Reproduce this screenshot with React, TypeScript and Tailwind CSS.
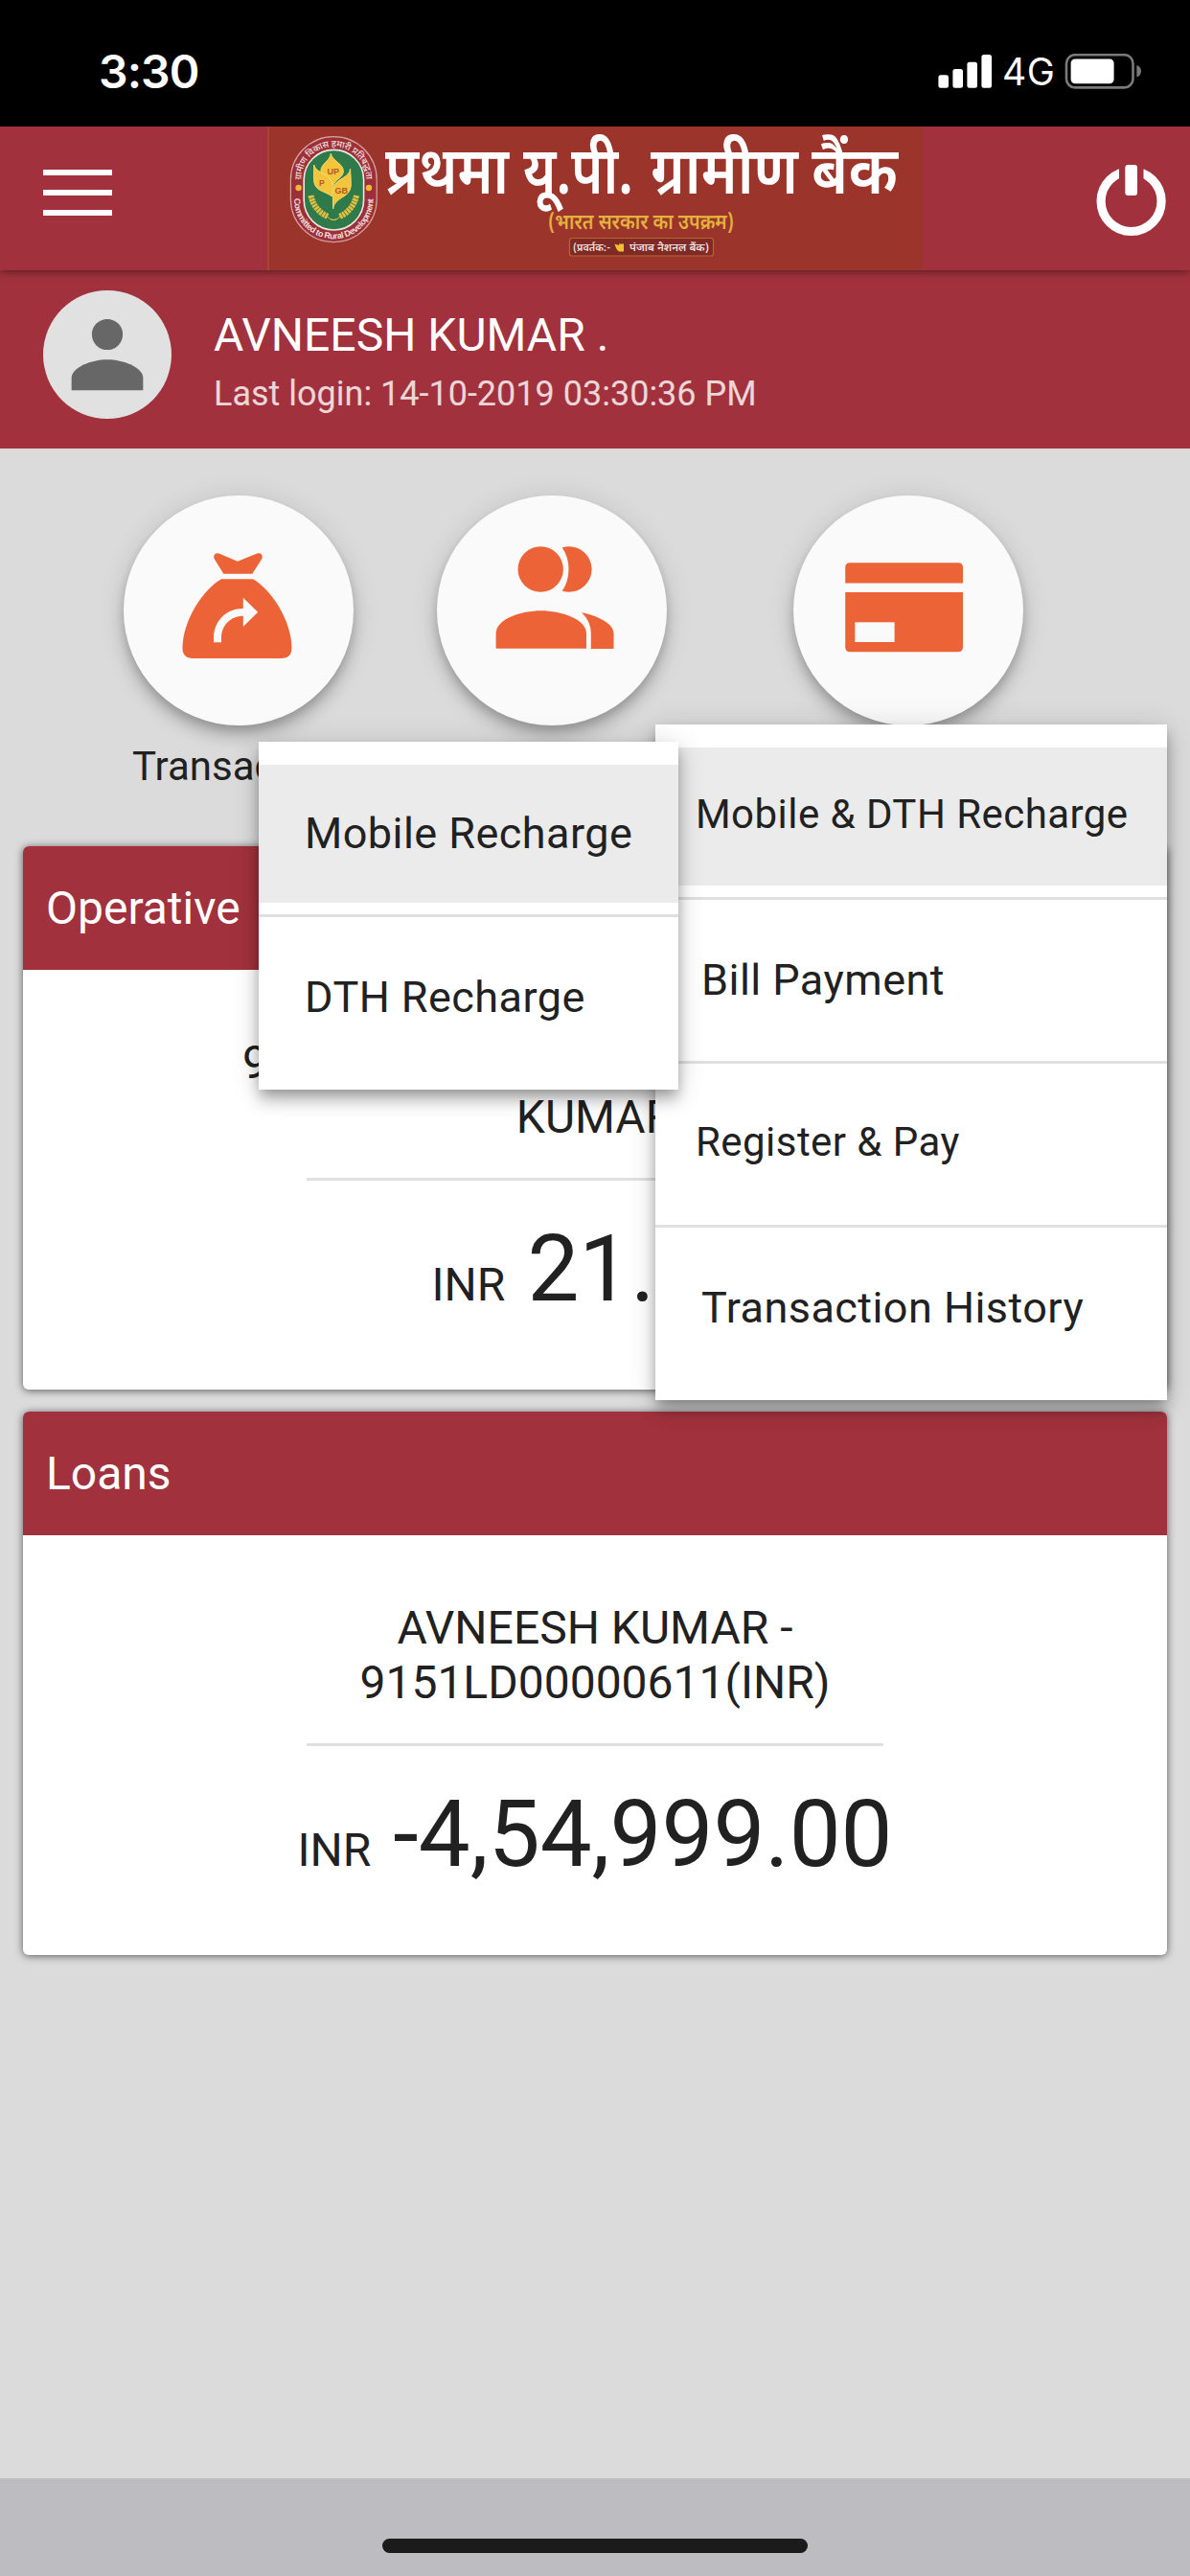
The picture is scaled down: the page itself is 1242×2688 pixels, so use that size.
import type { ReactNode } from 'react';

function StatusBar() {
  return (
    <div className="flex h-[132px] items-start justify-between bg-black pr-[51px] pl-[103px] text-white">
      <span className="mt-[45px] font-['Inter'] text-[48px] leading-[60px] font-semibold tracking-[-0.9px]">3:30</span>
      <div className="mt-[56px] flex items-center">
        <svg width="56" height="37" viewBox="979 56 56 37" fill="#fff">
          <rect x="979.4" y="78.3" width="10.6" height="13.4" rx="2.5" />
          <rect x="994.4" y="72" width="10.6" height="19.7" rx="2.5" />
          <rect x="1009.4" y="64.7" width="10.6" height="27" rx="2.5" />
          <rect x="1024.4" y="57" width="10.6" height="34.7" rx="2.5" />
        </svg>
        <span className="ml-[11px] w-[65px] font-['Inter'] text-[39px] leading-[37px] tracking-[0.5px]">4G</span>
        <svg width="80" height="37" viewBox="1111 56 80 37">
          <rect x="1113" y="57.2" width="69.5" height="34.2" rx="9" fill="none" stroke="#7a7a7a" strokeWidth="2.6" />
          <rect x="1117.6" y="61.4" width="45" height="25.8" rx="4.5" fill="#fff" />
          <path d="M1186.4 68 C1189.5 69.2 1191 71.5 1191 74.3 S1189.5 79.4 1186.4 80.6Z" fill="#7a7a7a" />
        </svg>
      </div>
    </div>
  );
}

function BankEmblem() {
  return (
    <g>
      <rect x="303.4" y="142.6" width="89.8" height="110" rx="44.9" fill="#9b3038" stroke="#d9a3a0" strokeWidth="1.2" />
      <rect x="317.2" y="156.4" width="62.4" height="83.6" rx="31.2" fill="#2f7a4b" stroke="#f0e6e0" strokeWidth="1.6" />
      <path id="emblem-top" d="M314.5 189 V187 A33.8 33.8 0 0 1 382.1 187 V189" fill="none" />
      <path id="emblem-bottom" d="M307 206 V208 A41.3 41.3 0 0 0 389.6 208 V206" fill="none" />
      <text className="font-['Noto_Sans_Devanagari',sans-serif]" fontSize="9.5" fontWeight="500" fill="#f1dcda">
        <textPath href="#emblem-top" startOffset="1" textLength="107">ग्रामीण विकास हमारी प्रतिबद्धता</textPath>
      </text>
      <text className="font-['Liberation_Sans',sans-serif]" fontSize="9" fontWeight="700" fill="#f1dcda">
        <textPath href="#emblem-bottom" startOffset="1" textLength="131">Committed to Rural Development</textPath>
      </text>
      <circle cx="311.6" cy="196" r="3.2" fill="#f2b632" />
      <circle cx="385" cy="196" r="3.2" fill="#f2b632" />
      <g fill="#f3c53c" stroke="#f7e27a" strokeWidth="0.8" strokeLinejoin="round">
        <path d="M345.3 160 C346.5 168 358.8 170.5 358.4 179 C358 185.5 350.5 186.5 347.8 193.5 C344.5 186.5 334.6 185.5 334.8 178.5 C335 170.5 344.6 168 345.3 160Z" />
        <path d="M327.6 172 C330.5 182 345.5 180 347.3 194 C347.8 199 346.8 203 346.4 205 C340 199.5 329.6 200 327.8 190 C327 184 327.8 178 327.6 172Z" />
        <path d="M365.6 176 C365 186 349.5 186 347.8 197 C347.5 205 347.2 211 347.6 218 C349.5 205 365 207 366.3 194 C366.6 188 365.8 182 365.6 176Z" />
      </g>
      <g className="font-['Liberation_Sans',sans-serif]" fontWeight="700" fill="#b5562a">
        <text x="341.5" y="181.5" fontSize="9">UP</text>
        <text x="333" y="194" fontSize="8.5">P</text>
        <text x="349.5" y="201.5" fontSize="9">GB</text>
      </g>
      <g stroke="#e5c03f" fill="none">
        <path d="M324.5 204 C327 216 334 222 342 226" strokeWidth="6" strokeDasharray="2.6 0.7" />
        <path d="M372 204 C369.5 216 362.5 222 354.5 226" strokeWidth="6" strokeDasharray="2.6 0.7" />
        <path d="M341 225 Q345 231 351 229 M355.5 225 Q351.5 231 345.5 229" strokeWidth="1" />
      </g>
    </g>
  );
}

function BankBanner() {
  return (
    <svg className="block" width="684" height="150" viewBox="279 132 684 150">
      <rect x="279" y="132" width="684" height="150" fill="#9b352c" />
      <rect x="279" y="132" width="2" height="150" fill="#a8452f" />
      <BankEmblem />
      <g className="font-['Noto_Sans_Devanagari',sans-serif]" fontSize="69" fontWeight="600" fill="#fff">
        <text x="402" y="202" textLength="129" lengthAdjust="spacingAndGlyphs">प्रथमा</text>
        <text x="546" y="202" textLength="115" lengthAdjust="spacingAndGlyphs">यू.पी.</text>
        <text x="679" y="202" textLength="154" lengthAdjust="spacingAndGlyphs">ग्रामीण</text>
        <text x="847" y="202" textLength="90" lengthAdjust="spacingAndGlyphs">बैंक</text>
      </g>
      <text className="font-['Noto_Sans_Devanagari',sans-serif]" x="572" y="238.5" fontSize="22" fontWeight="600" fill="#e3b23c" textLength="194" lengthAdjust="spacingAndGlyphs">
        (भारत सरकार का उपक्रम)
      </text>
      <rect x="594.5" y="248.5" width="150" height="18.5" rx="2.5" fill="#7f2a26" stroke="#b8662b" strokeWidth="1.2" />
      <g className="font-['Noto_Sans_Devanagari',sans-serif]" fontSize="11" fontWeight="600" fill="#f0dfdc">
        <text x="598" y="262" textLength="39" lengthAdjust="spacingAndGlyphs">(प्रवर्तक:-</text>
        <text x="657" y="262" textLength="83" lengthAdjust="spacingAndGlyphs">पंजाब नैशनल बैंक)</text>
      </g>
      <path d="M641.5 254.5 L646 256 V254.5 H651 V262.5 H646 Q643 260.5 641.5 254.5Z" fill="#f0c02f" />
    </svg>
  );
}

function Header() {
  return (
    <header className="relative z-10 flex h-[150px] items-start bg-[#a1323d] shadow-[0_1px_9px_rgba(0,0,0,0.5)]">
      <div className="mt-[45px] ml-[45px] flex w-[72px] flex-col gap-[15px]">
        <div className="h-[6px] bg-white" />
        <div className="h-[6px] bg-white" />
        <div className="h-[6px] bg-white" />
      </div>
      <div className="ml-[162px]">
        <BankBanner />
      </div>
      <svg className="mt-[38px] ml-[180px]" width="76" height="78" viewBox="1143 170 76 78">
        <circle cx="1180.6" cy="210" r="31.5" fill="none" stroke="#fff" strokeWidth="9.2" />
        <rect x="1168" y="170" width="25.5" height="24" fill="#a1323d" />
        <rect x="1174.3" y="172" width="12.7" height="32" rx="3" fill="#fff" />
      </svg>
    </header>
  );
}

function UserBar() {
  return (
    <section className="flex h-[186px] items-start bg-[#a1323d] pl-[44.5px] font-['Roboto',sans-serif]">
      <div className="mt-[21px] flex h-[134px] w-[134px] items-center justify-center rounded-full bg-[#e1e1e1]">
        <svg width="112" height="112" viewBox="0 0 24 24" fill="#676767">
          <circle cx="12" cy="7.5" r="3.45" />
          <path d="M4 20 V17.2 C4 14.8 8.5 13.1 12 13.1 S20 14.8 20 17.2 V20Z" />
        </svg>
      </div>
      <div className="mt-[39px] ml-[44.5px] flex flex-col gap-[12px]">
        <p className="text-[48px] leading-[57px] text-white">AVNEESH KUMAR .</p>
        <p className="text-[36px] leading-[42px] text-white/80">Last login: 14-10-2019 03:30:36 PM</p>
      </div>
    </section>
  );
}

function MoneyBagIcon() {
  return (
    <svg width="240" height="240" viewBox="129 517 240 240">
      <g fill="#ec6337">
        <path d="M233.3 598.7 L224.2 584 C221.5 579.5 225 575.8 229 577.8 L248 585.7 L268 577.8 C272 576 275.5 579.5 272.8 584 L263.3 598.7Z" />
        <path d="M231 604.3 H264 C283 615 304.4 648 304.4 676 Q304.4 687 293.4 687 H201.5 Q190.5 687 190.5 676 C190.5 648 212 615 231 604.3Z" />
      </g>
      <path d="M223 670.3 V666 C223 648 236 635 253.8 635 V623.7 L269.2 638.7 L253.8 654 V642.7 C241 642.7 231 652 231 666 V670.3Z" fill="#fafafa" />
    </svg>
  );
}

function PeopleIcon() {
  return (
    <svg width="240" height="240" viewBox="456 517 240 240" fill="#ec6337">
      <circle cx="564.2" cy="594" r="23.7" />
      <path d="M586.8 571.5 Q590 570.3 593.9 570.3 A23.7 23.7 0 0 1 593.9 617.7 Q590 617.7 586.8 616.5 Q593.5 607 593.5 594 Q593.5 581 586.8 571.5Z" />
      <path d="M517.6 676.7 V661 C517.6 646 544 637.3 564.5 637.3 S612 646 612 661 V676.7Z" />
      <path d="M607 639.3 C622 642 640.5 650 640.5 661 V677 H616.8 V661 C616.8 652 613 645 607 639.3Z" />
    </svg>
  );
}

function CardIcon() {
  return (
    <svg width="240" height="240" viewBox="828 517 240 240" fill="#ec6337">
      <path d="M882.2 608.5 V592.3 Q882.2 587.3 887.2 587.3 H1000 Q1005 587.3 1005 592.3 V608.5Z" />
      <path d="M882.2 618 H1005 V675.3 Q1005 680.3 1000 680.3 H887.2 Q882.2 680.3 882.2 675.3Z" />
      <rect x="892.3" y="649.3" width="41.3" height="20.7" fill="#fafafa" />
    </svg>
  );
}

function RoundButton({ children }: { children: ReactNode }) {
  return (
    <div className="h-[240px] w-[240px] rounded-full bg-[#fafafa] shadow-[0_6px_12px_-3px_rgba(0,0,0,0.2),0_12px_15px_rgba(0,0,0,0.14),0_3px_30px_rgba(0,0,0,0.12)]">
      {children}
    </div>
  );
}

function QuickActions() {
  return (
    <section className="flex h-[415px] items-start pt-[49px] pl-[129px]">
      <div className="w-[240px]">
        <RoundButton><MoneyBagIcon /></RoundButton>
        <p className="mt-[19px] ml-[9px] text-[42px] leading-[48px] whitespace-nowrap">Transactions</p>
      </div>
      <div className="ml-[87px]">
        <RoundButton><PeopleIcon /></RoundButton>
      </div>
      <div className="ml-[132px]">
        <RoundButton><CardIcon /></RoundButton>
      </div>
    </section>
  );
}

function AccountCard({ title, amount, children }: { title: string; amount: string; children: ReactNode }) {
  return (
    <article className="mx-[24px] h-[567px] overflow-hidden rounded-[6px] bg-white shadow-[0_1px_9px_rgba(0,0,0,0.6)]">
      <h2 className="flex h-[129px] items-center bg-[#a1323d] pl-[24px] text-[48px] leading-[57px] text-white">{title}</h2>
      <div className="flex flex-col items-center pt-[68px]">
        <div className="text-center text-[48px] leading-[57px]">{children}</div>
        <div className="mt-[35px] h-[3px] w-[602px] bg-[#e0e0e0]" />
        <div className="mt-[36px] flex items-baseline gap-[23px]">
          <span className="text-[48px]">INR</span>
          <span className="text-[96px] leading-[112px]">{amount}</span>
        </div>
      </div>
    </article>
  );
}

function Divider() {
  return <div className="h-[3px] bg-[#e0e0e0]" />;
}

const menuShadow =
  'shadow-[0_6px_12px_-3px_rgba(0,0,0,0.25),0_12px_15px_rgba(0,0,0,0.18),0_3px_30px_rgba(0,0,0,0.14)]';

function PaymentsMenu() {
  return (
    <div className={`absolute top-[756px] left-[684px] w-[534px] bg-white py-[12px] tracking-[0.45px] ${menuShadow}`}>
      <div className="py-[12px]">
        <div className="flex h-[144px] items-center bg-[#ebebeb] pb-[5px] pl-[42px] text-[42px]">Mobile &amp; DTH Recharge</div>
      </div>
      <Divider />
      <div className="flex h-[168px] items-center pl-[48px] text-[45px]">Bill Payment</div>
      <Divider />
      <div className="flex h-[168px] items-center pb-[5px] pl-[42px] text-[42px]">Register &amp; Pay</div>
      <Divider />
      <div className="flex h-[168px] items-center pl-[48px] text-[45px]">Transaction History</div>
    </div>
  );
}

function RechargeMenu() {
  return (
    <div className={`absolute top-[774px] left-[270px] w-[438px] bg-white py-[12px] text-[45px] tracking-[0.45px] ${menuShadow}`}>
      <div className="py-[12px]">
        <div className="flex h-[144px] items-center bg-[#ebebeb] pl-[48px]">Mobile Recharge</div>
      </div>
      <Divider />
      <div className="flex h-[168px] items-center pl-[48px]">DTH Recharge</div>
    </div>
  );
}

export default function App() {
  return (
    <div className="relative flex h-[2688px] w-[1242px] flex-col overflow-hidden bg-[#dbdbdb] font-['Roboto',sans-serif] text-[#212121]">
      <StatusBar />
      <Header />
      <UserBar />
      <QuickActions />
      <main className="flex flex-1 flex-col gap-[23px]">
        <AccountCard title="Operative" amount="21.00">
          <p className="w-[736px] text-left">9151 - AVNEESH</p>
          <p>KUMAR</p>
        </AccountCard>
        <AccountCard title="Loans" amount="-4,54,999.00">
          <p>AVNEESH KUMAR -</p>
          <p>9151LD00000611(INR)</p>
        </AccountCard>
      </main>
      <footer className="flex h-[102px] items-start justify-center bg-[#bdbcc1] pt-[63px]">
        <div className="h-[15px] w-[444px] rounded-full bg-[#1b1b1b]" />
      </footer>
      <PaymentsMenu />
      <RechargeMenu />
    </div>
  );
}
